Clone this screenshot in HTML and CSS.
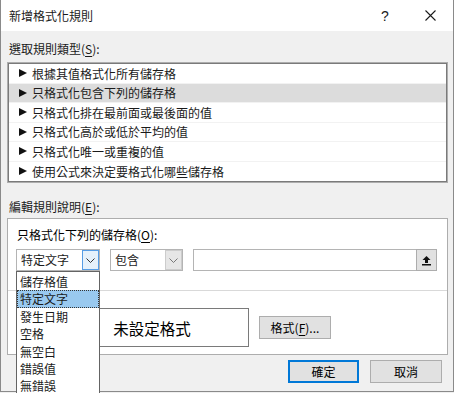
FILE: index.html
```html
<!DOCTYPE html>
<html lang="zh-Hant">
<head>
    <meta charset="UTF-8">
    <title>新增格式化規則</title>
    <link rel="stylesheet" href="styles.css">
</head>
<body>
    <div class="window">
        <div class="titlebar">
            <div class="title">新增格式化規則</div>
            <div class="help">?</div>
            <div class="close">
                <svg width="11" height="11" viewBox="0 0 11 11">
                    <path d="M0.5 0.5 L10.5 10.5 M10.5 0.5 L0.5 10.5" stroke="#1a1a1a" stroke-width="1.1" fill="none"/>
                </svg>
            </div>
        </div>

        <div class="dialog">
            <div class="label">選取規則類型(<u>S</u>):</div>
            <div class="rule-list">
                <div class="rule"><span class="arrow"></span>根據其值格式化所有儲存格</div>
                <div class="rule selected"><span class="arrow"></span>只格式化包含下列的儲存格</div>
                <div class="rule"><span class="arrow"></span>只格式化排在最前面或最後面的值</div>
                <div class="rule"><span class="arrow"></span>只格式化高於或低於平均的值</div>
                <div class="rule"><span class="arrow"></span>只格式化唯一或重複的值</div>
                <div class="rule"><span class="arrow"></span>使用公式來決定要格式化哪些儲存格</div>
            </div>

            <div class="label label-edit">編輯規則說明(<u>E</u>):</div>
            <div class="edit-box">
                <div class="heading">只格式化下列的儲存格(<u>O</u>):</div>
                <div class="controls">
                    <div class="combo combo-type">
                        <span class="combo-text">特定文字</span>
                        <span class="combo-btn active">
                            <svg width="9" height="5" viewBox="0 0 9 5"><path d="M0.5 0.5 L4.5 4.5 L8.5 0.5" stroke="#333" fill="none"/></svg>
                        </span>
                        <div class="popup">
                            <div class="option">儲存格值</div>
                            <div class="option current">特定文字</div>
                            <div class="option">發生日期</div>
                            <div class="option">空格</div>
                            <div class="option">無空白</div>
                            <div class="option">錯誤值</div>
                            <div class="option">無錯誤</div>
                        </div>
                    </div>
                    <div class="combo combo-op">
                        <span class="combo-text">包含</span>
                        <span class="combo-btn">
                            <svg width="9" height="5" viewBox="0 0 9 5"><path d="M0.5 0.5 L4.5 4.5 L8.5 0.5" stroke="#777" fill="none"/></svg>
                        </span>
                    </div>
                    <div class="textfield">
                        <span class="ref-btn">
                            <svg width="11" height="11" viewBox="0 0 11 11">
                                <path d="M5.5 1 L1.5 5 H4 V8 H7 V5 H9.5 Z" fill="#111"/>
                                <rect x="1" y="9" width="9" height="1.5" fill="#111"/>
                            </svg>
                        </span>
                    </div>
                </div>
                <div class="separator"></div>
                <div class="preview-row">
                    <div class="preview">未設定格式</div>
                    <div class="button">格式(<u>F</u>)...</div>
                </div>
            </div>

            <div class="footer">
                <div class="button default">確定</div>
                <div class="button">取消</div>
            </div>
        </div>
    </div>
</body>
</html>
```

FILE: styles.css
```css
body {
    margin: 0;
    width: 454px;
    height: 393px;
    overflow: hidden;
    background: #f0f0f0;
    font-family: "Noto Sans CJK TC", "Noto Sans", sans-serif;
    font-size: 12px;
    color: #1a1a1a;
}

u {
    text-decoration-thickness: 1px;
    text-underline-offset: 2px;
}

.window {
    width: 454px;
    height: 392px;
    box-sizing: border-box;
    border: 1px solid #8a8a8a;
    border-top: none;
    background: #f0f0f0;
    position: relative;
}

/* Title bar */
.titlebar {
    height: 31px;
    background: #fff;
    display: flex;
    align-items: center;
}

.title {
    padding-left: 8px;
    flex: 1;
    line-height: 16px;
}

.help {
    width: 12px;
    text-align: center;
    font-family: "Liberation Sans", sans-serif;
    font-size: 14px;
    margin-right: 34px;
}

.close {
    width: 11px;
    height: 11px;
    margin-right: 17px;
    display: flex;
}

/* Dialog body */
.dialog {
    padding: 10px 5px 0 6px;
}

.label {
    line-height: 16px;
    padding-left: 2px;
    margin-bottom: 5px;
}

.label-edit {
    margin-top: 16px;
    margin-bottom: 3px;
}

.rule-list {
    background: #fff;
    border: 1px solid #adadad;
    box-shadow: inset 0 0 0 1px #7a7a7a;
    padding: 1px;
}

.rule {
    height: 19.5px;
    line-height: 19.5px;
    display: flex;
    align-items: center;
    padding-left: 10px;
    border-bottom: 1px solid #f2f2f2;
    box-sizing: border-box;
}

.rule:last-child {
    border-bottom: none;
}

.rule.selected {
    background: #dcdcdc;
}

.arrow {
    width: 0;
    height: 0;
    border-left: 8px solid #111;
    border-top: 4.5px solid transparent;
    border-bottom: 4.5px solid transparent;
    margin-right: 5px;
}

/* Edit rule box */
.edit-box {
    background: #fff;
    border: 1px solid #adadad;
    height: 137px;
    box-sizing: border-box;
    padding: 8px 10px 0 8px;
}

.heading {
    line-height: 16px;
    padding-left: 1px;
    color: #000;
}

.controls {
    display: flex;
    gap: 10px;
    margin-top: 6px;
    height: 22px;
}

.combo {
    position: relative;
    display: flex;
    align-items: center;
    border: 1px solid #b4b4b4;
    box-sizing: border-box;
    background: #fff;
}

.combo-type {
    width: 84px;
}

.combo-op {
    width: 73px;
}

.combo-text {
    flex: 1;
    padding-left: 4px;
    line-height: 16px;
}

.combo-btn {
    width: 17px;
    height: 20px;
    box-sizing: border-box;
    border: 1px solid #cccccc;
    background: #e6e6e6;
    display: flex;
    align-items: center;
    justify-content: center;
}

.combo-btn.active {
    border-color: #569de5;
    background: #e5f1fb;
}

.popup {
    position: absolute;
    top: 21px;
    left: -1px;
    width: 84px;
    height: 130px;
    box-sizing: border-box;
    border: 1px solid #646464;
    background: #fff;
    padding-top: 1px;
    z-index: 2;
}

.option {
    height: 17.4px;
    line-height: 17.4px;
    padding-left: 3px;
    box-sizing: border-box;
}

.option.current {
    background: #99c9ef;
    outline: 1px dotted #333;
    outline-offset: -1px;
}

.textfield {
    flex: 1;
    border: 1px solid #b4b4b4;
    box-sizing: border-box;
    display: flex;
    justify-content: flex-end;
    align-items: center;
}

.ref-btn {
    width: 21px;
    height: 22px;
    box-sizing: border-box;
    border: 1px solid #adadad;
    background: #e1e1e1;
    display: flex;
    align-items: center;
    justify-content: center;
    margin-right: -1px;
}

.separator {
    height: 1px;
    background: #d9d9d9;
    margin: 19px -10px 0 -8px;
}

.preview-row {
    display: flex;
    align-items: center;
    margin-top: 17px;
    padding-left: 39px;
}

.preview {
    width: 194px;
    height: 39px;
    box-sizing: border-box;
    border: 1px solid #7a7a7a;
    display: flex;
    align-items: center;
    justify-content: center;
    font-size: 15.5px;
    color: #000;
}

.button {
    width: 72px;
    height: 23px;
    box-sizing: border-box;
    border: 1px solid #adadad;
    background: #e1e1e1;
    display: flex;
    align-items: center;
    justify-content: center;
    line-height: 16px;
    color: #000;
}

.preview-row .button {
    margin-left: 10px;
}

/* Footer buttons */
.footer {
    display: flex;
    justify-content: flex-end;
    gap: 11px;
    margin-top: 5px;
    padding-right: 6px;
}

.button.default {
    width: 71px;
    border: 2px solid #0078d7;
}
```
